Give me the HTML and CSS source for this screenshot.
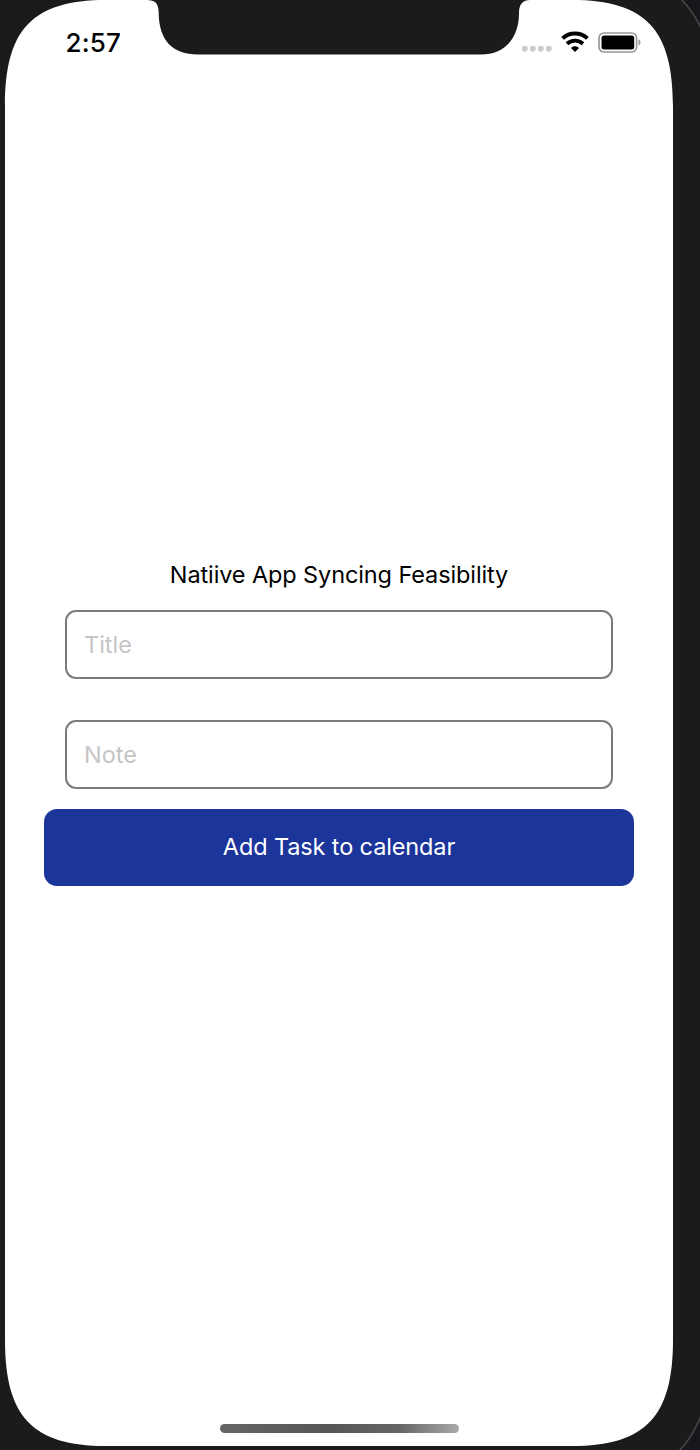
FILE: index.html
```html
<!DOCTYPE html>
<html lang="en">
<head>
<meta charset="utf-8">
<title>Task calendar</title>
<link rel="stylesheet" href="styles.css">
</head>
<body>
<div class="device">
  <svg class="device-frame" viewBox="0 0 700 1450" aria-hidden="true">
    <path fill="#15171a" stroke="#48494b" stroke-width="1.500" d="M681 -1Q693 11 701 28V-1ZM679 1451Q692 1438 701 1416V1451Z"/>
    <path fill="#fff" d="M5 106C5 30 32 0 106 0H147C155 0 158.500 3 158.700 13C159 40 172 54.500 198 54.500H481C505 54.500 519 38 519 13C519 4 523 0 530 0H572C646 0 673 30 673 106V1340C673 1416 646 1446 572 1446H106C32 1446 5 1416 5 1340Z"/>
  </svg>
  <div class="screen">
    <header class="status-bar">
      <span class="clock">2:57</span>
      <div class="indicators">
        <svg class="signal" viewBox="0 0 30 6" fill="#cacaca"><rect width="5.600" height="5.600" rx="1.800"/><rect x="8" width="5.600" height="5.600" rx="1.800"/><rect x="16" width="5.600" height="5.600" rx="1.800"/><rect x="24" width="5.600" height="5.600" rx="1.800"/></svg>
        <svg class="wifi" viewBox="0 0 28 21"><g fill="none" stroke="#000" stroke-width="3.900"><path d="M1.600 7.400C8.500 .8 19.500 .8 26.400 7.400"/><path d="M6 12.700C10.500 8.600 17.500 8.600 22 12.700"/></g><path d="M14 21L10 17C12.300 14.800 15.700 14.800 18 17Z"/></svg>
        <svg class="battery" viewBox="0 0 44 22"><rect x="1" y="1" width="37.600" height="19" rx="5" fill="none" stroke="#999" stroke-width="1.700"/><rect x="3.500" y="3.500" width="32.700" height="14" rx="2.500"/><path fill="#999" d="M40.500 7.300C43.200 8.500 43.200 12.500 40.500 13.700Z"/></svg>
      </div>
    </header>
    <main class="task-form">
      <h1 class="heading">Natiive App Syncing Feasibility</h1>
      <input class="field" type="text" placeholder="Title" aria-label="Title">
      <input class="field field-note" type="text" placeholder="Note" aria-label="Note">
      <button class="submit" type="button">Add Task to calendar</button>
    </main>
    <div class="home-indicator"></div>
  </div>
</div>
</body>
</html>
```
FILE: styles.css
```css
* { box-sizing: border-box; }
body { margin: 0; background: #1b1b1b; font-family: Inter, "Liberation Sans", sans-serif; }
.device { position: relative; width: 700px; height: 1450px; overflow: hidden; background: #1b1b1b; }
.device-frame { position: absolute; inset: 0; width: 700px; height: 1450px; }
.screen { position: relative; width: 668px; height: 1446px; margin-left: 5px; display: flex; flex-direction: column; }
.status-bar { height: 86px; padding: 0 31px 0 60.500px; display: flex; justify-content: space-between; align-items: flex-start; }
.clock { padding-top: 27px; font-size: 26px; line-height: 32px; font-weight: 500; letter-spacing: .2px; }
.indicators { display: flex; padding-top: 31px; }
.signal { width: 30px; height: 6px; margin: 15px 9px 0 0; }
.wifi { width: 28px; height: 21px; margin-right: 9px; }
.battery { width: 44px; height: 22px; margin-top: .5px; }
.task-form { flex: 1; padding: 472px 39px 0 39px; display: flex; flex-direction: column; }
.heading { margin: 0; font-size: 23.500px; line-height: 33px; font-weight: 400; text-align: center; white-space: nowrap; letter-spacing: -.11px; }
.field { height: 69px; margin: 18.500px 21px 0 21px; padding: 0 17px; border: 2px solid #7b7b7b; border-radius: 11px; background: #fff; color: #000; font: 400 23.500px/32px Inter, "Liberation Sans", sans-serif; outline: 0; }
.field::placeholder { color: #c5c5c7; opacity: 1; }
.field-note { margin-top: 41px; }
.submit { height: 77px; margin-top: 20px; padding: 0; border: 0; border-radius: 13px; background: #1b359b; color: #fff; font: 400 23.500px/32px Inter, "Liberation Sans", sans-serif; letter-spacing: -.13px; }
.home-indicator { width: 239px; height: 9px; margin: 0 0 13.500px 215px; border-radius: 5px; background: linear-gradient(100deg, #666 0%, #555 45%, #666 75%, #aaa 100%); }
```
